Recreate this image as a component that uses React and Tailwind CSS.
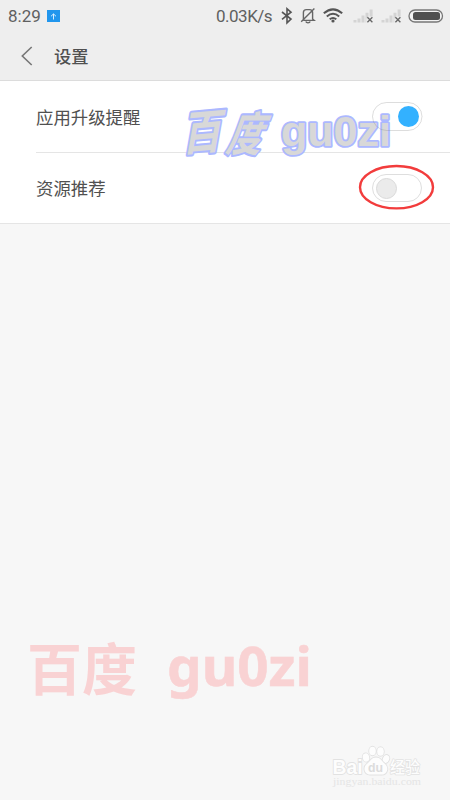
function Bluetooth() {
  return (
    <svg width="12" height="18" viewBox="0 0 12 18" fill="none" stroke="#555" strokeWidth="1.6">
      <path d="M1 5 L10 12 L6 15.8 V1.8 L10 5.2 L1 12.3" />
    </svg>
  );
}

function BellOff() {
  return (
    <svg width="16" height="18" viewBox="0 0 16 18" fill="none" stroke="#666" strokeWidth="1.4">
      <path d="M3.4 12.5V5.6Q3.4 2.6 6.4 2.6H9.6Q12.6 2.6 12.6 5.6V12L14.2 13.4H3.4M5.8 14.6c.6 1.7 3.8 1.7 4.4 0M1.2 14.8 14.4 1.6" />
    </svg>
  );
}

function Wifi() {
  return (
    <svg width="20" height="16" viewBox="0 0 20 16" fill="none" stroke="#555" strokeWidth="2">
      <path d="M.8 5.3Q10-2.6 19.2 5.3M3.8 8.4Q10 3.2 16.2 8.4M6.7 11.3Q10 8.6 13.3 11.3" />
      <circle cx="10" cy="13" r="1.6" fill="#555" stroke="none" />
    </svg>
  );
}

function Signal() {
  return (
    <svg width="21" height="16" viewBox="0 0 21 16">
      <path d="M.5 12h3v2.4h-3zM4.5 10.4h3v4h-3zM8.5 7.6h3v6.8h-3zM12.5 4.8h3v3.4l-2.2 2.2v4h-.8zM16.6 1.4h3v7h-3z" fill="#d4d4d4" />
      <path d="m14.4 9.2 5 5M19.4 9.2l-5 5" stroke="#666" strokeWidth="1.3" />
    </svg>
  );
}

function Battery() {
  return (
    <svg width="36" height="14" viewBox="0 0 36 14">
      <rect x="1" y="1" width="33.5" height="12" rx="6" fill="#f2f2f2" stroke="#777" strokeWidth="1.3" />
      <rect x="5" y="3" width="27" height="8" rx="2.5" fill="#505050" />
    </svg>
  );
}

function Toggle({ on }) {
  return (
    <span className={`flex h-[28px] w-[50px] items-center rounded-full border bg-white ${on ? "justify-end border-transparent pr-[2px]" : "border-[#dedede] pl-[3px]"}`}>
      <span className={`size-[21px] rounded-full ${on ? "bg-[#33b1ff]" : "border border-[#dadada] bg-[#ebebeb]"}`} />
    </span>
  );
}

function Watermarks() {
  return (
    <svg className="pointer-events-none absolute inset-0" width="450" height="800" viewBox="0 0 450 800">
      <g fill="#d8d8d8" stroke="#acb8ff" strokeLinejoin="round" fontWeight="900">
        <g fontFamily="'Noto Sans CJK SC', sans-serif" fontWeight="700" fontSize="44" paintOrder="stroke" strokeWidth="4">
          <text transform="translate(182 151) rotate(-5) skewX(-15) scale(.9 1.06)">百</text>
          <text transform="translate(225 151) skewX(-20) scale(.8 1.06)">度</text>
        </g>
        <text x="281" y="145.5" fontSize="42" strokeWidth="3.6" paintOrder="stroke" textLength="110" lengthAdjust="spacingAndGlyphs" fontFamily="'Liberation Sans', sans-serif">gu0zi</text>
      </g>
      <rect x="372.5" y="102.5" width="49.5" height="28" rx="14" fill="none" stroke="#777" strokeOpacity=".25" />
      <ellipse cx="396.5" cy="187.2" rx="36.5" ry="21.2" fill="none" stroke="#f23c3c" strokeWidth="2.4" />
      <g fill="#f9d2d3" fontWeight="700">
        <text x="27" y="690" fontSize="55.5" textLength="110" lengthAdjust="spacingAndGlyphs" fontFamily="'Noto Sans CJK SC', sans-serif">百度</text>
        <text x="167" y="686" fontSize="54" textLength="145" lengthAdjust="spacingAndGlyphs" stroke="#f9d2d3" strokeWidth=".5" fontFamily="'Noto Sans', sans-serif">gu0zi</text>
      </g>
      <g fill="#fdfdfd" stroke="#e2e2e2" strokeWidth="1.8" paintOrder="stroke" strokeLinejoin="round" fontWeight="700">
        <text x="332.5" y="774" fontSize="21" textLength="30" lengthAdjust="spacingAndGlyphs" fontFamily="'Liberation Sans', sans-serif">Bai</text>
        <ellipse cx="366" cy="757.5" rx="3.2" ry="4.2" transform="rotate(-12 366 757.5)" />
        <ellipse cx="372.5" cy="751" rx="3.3" ry="4.3" />
        <ellipse cx="380.5" cy="751.5" rx="3.3" ry="4.3" />
        <ellipse cx="386" cy="759" rx="3.1" ry="4.1" transform="rotate(20 386 759)" />
        <path d="M376 757.5c4.5 0 5.5 3.5 8.5 6 5 4 2.8 11-2.5 11h-12c-5.5 0-7.8-7-2.6-11 3.2-2.5 4.1-6 8.6-6Z" />
        <text x="390" y="773" fontSize="15.5" strokeWidth="1.5" fontWeight="500" textLength="30" lengthAdjust="spacingAndGlyphs" fontFamily="'Noto Sans CJK SC', sans-serif">经验</text>
      </g>
      <text x="368" y="772" fontSize="13" fontWeight="700" fill="#dcdcdc" textLength="15" lengthAdjust="spacingAndGlyphs" fontFamily="'Liberation Sans', sans-serif">du</text>
      <text x="333" y="785" fontSize="10.5" fill="#e5e5e5" textLength="88" lengthAdjust="spacingAndGlyphs" fontFamily="'Liberation Serif', serif">jingyan.baidu.com</text>
    </svg>
  );
}

export default function App() {
  return (
    <main className="relative h-[800px] w-[450px] overflow-hidden bg-[#f7f7f7] font-['Noto_Sans_CJK_SC',sans-serif] text-[#505050]">
      <header className="h-[81px] border-b border-[#dcdcdc] bg-[#eeeeee]">
        <div className="flex h-[32px] items-center justify-between pr-[6px] pl-[8px] font-[Roboto,sans-serif] text-[#606060]">
          <div className="flex items-center gap-[6px]">
            <span className="w-[33px] text-[17px] leading-8">8:29</span>
            <span className="flex h-[12px] w-[13px] items-center justify-center bg-[#2196ed]">
              <svg width="7" height="7" viewBox="0 0 7 7" fill="none" stroke="#d5edff">
                <path d="M3.5 6.5V1M1 3.3 3.5.9 6 3.3" />
              </svg>
            </span>
          </div>
          <div className="flex items-center">
            <span className="mr-[8px] w-[57px] text-[17px] leading-8 tracking-[-0.5px] whitespace-nowrap">0.03K/s</span>
            <Bluetooth />
            <span className="ml-[7px]"><BellOff /></span>
            <span className="ml-[7px]"><Wifi /></span>
            <span className="ml-[10px]"><Signal /></span>
            <span className="ml-[7px]"><Signal /></span>
            <span className="ml-[6px]"><Battery /></span>
          </div>
        </div>
        <div className="flex h-[48px] items-center gap-[21px] pl-[21px]">
          <svg width="12" height="20" viewBox="0 0 12 20" fill="none" stroke="#777" strokeWidth="1.6">
            <path d="M10.7 1 1.3 10l9.4 9" />
          </svg>
          <h1 className="text-[17.3px] leading-6 font-medium">设置</h1>
        </div>
      </header>
      <section className="h-[143px] border-b border-[#e5e5e5] bg-white pl-[36px] text-[17.4px]">
        <div className="flex h-[72px] items-center justify-between border-b border-[#e5e5e5] pr-[28px]">
          <span className="pt-[2px]">应用升级提醒</span>
          <Toggle on />
        </div>
        <div className="flex h-[70px] items-center justify-between pr-[28px]">
          <span>资源推荐</span>
          <Toggle />
        </div>
      </section>
      <Watermarks />
    </main>
  );
}
